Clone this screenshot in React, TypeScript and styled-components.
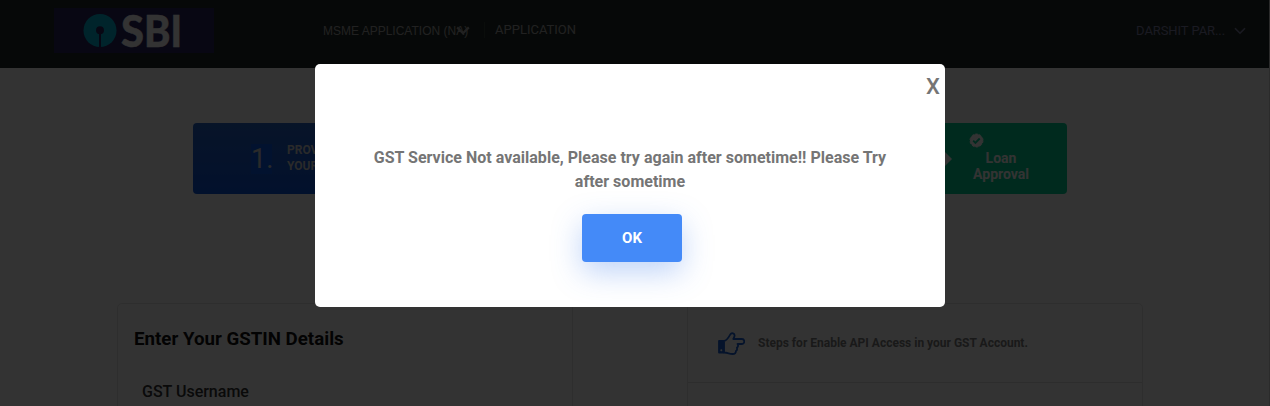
import React from 'react';
import styled, { createGlobalStyle } from 'styled-components';

const GlobalStyle = createGlobalStyle`
  *, *::before, *::after { box-sizing: border-box; }
  body { margin: 0; background: #fff; font-family: Roboto, sans-serif; overflow: hidden; }
`;

const Page = styled.div`
  width: 100%;
  height: 406px;
  overflow: hidden;
  background: #fff;
  border-right: 1px solid #d8d8d8;
`;

const Header = styled.header`
  display: flex;
  align-items: flex-start;
  height: 68px;
  padding-left: 54px;
  background: #222c28;
`;

const LogoBox = styled.div`
  width: 160px;
  height: 45px;
  margin-top: 8px;
  background: #2a2560;
  svg { display: block; overflow: visible; }
`;

const NavItem = styled.div<{ $left: number; $top: number; $family?: string; $color?: string; $size?: number; $width?: number; $spacing?: number }>`
  flex: none;
  display: flex;
  align-items: center;
  width: ${p => (p.$width ? p.$width + 'px' : 'auto')};
  margin: ${p => p.$top}px 0 0 ${p => p.$left}px;
  font-family: ${p => p.$family || 'Roboto'}, sans-serif;
  font-size: ${p => p.$size || 13}px;
  letter-spacing: ${p => p.$spacing || 0}px;
  line-height: 16px;
  white-space: nowrap;
  color: ${p => p.$color || '#a6a6a6'};
`;

const Chevron = styled.svg<{ $shift: number; $weight: number }>`
  flex: none;
  margin-left: ${p => p.$shift}px;
  fill: none;
  stroke: currentColor;
  stroke-width: ${p => p.$weight};
`;

const Divider = styled.div`
  width: 1px;
  height: 16px;
  margin: 22px 0 0 13px;
  background: #33403a;
`;

const Steps = styled.section`
  display: flex;
  width: 874px;
  height: 71px;
  margin: 55px 0 0 193px;
  border-radius: 4px;
  overflow: hidden;
`;

const CurrentStep = styled.div`
  display: flex;
  align-items: center;
  width: 219px;
  padding-left: 58px;
  background: linear-gradient(#2864c8, #0c54dc);
  color: #d0d0d0;
`;

const StepNumber = styled.span`
  width: 21px;
  height: 30px;
  background: #0a5ce8;
  font-size: 27px;
  line-height: 30px;
  font-weight: 400;
`;

const StepLabel = styled.span`
  margin-left: 15px;
  font-size: 12px;
  font-weight: 700;
  line-height: 16px;
  white-space: nowrap;
  margin-bottom: 2px;
`;

const MiddleSteps = styled.div`
  flex: 1;
  background: #00d294;
`;

const ApprovalStep = styled.div`
  display: flex;
  width: 123px;
  background: #00d294;
`;

const Arrow = styled.div`
  align-self: center;
  width: 0;
  border: 8px solid transparent;
  border-left-color: #fff;
  border-right-width: 0;
`;

const ApprovalBody = styled.div`
  width: 96px;
  padding: 10px 0 0 16px;
  color: #fff;
  font-size: 14px;
  font-weight: 700;
  line-height: 16px;
  svg { display: block; margin: 0 0 2px 1px; }
`;

const ApprovalText = styled.div`
  width: 66px;
  text-align: center;
`;

const Content = styled.main`
  display: flex;
  gap: 114px;
  margin: 109px 0 0 117px;
`;

const Panel = styled.section`
  width: 456px;
  height: 180px;
  border: 1px solid #e6e6e6;
  border-radius: 5px;
`;

const Title = styled.h2`
  margin: 24px 0 0 16px;
  font-size: 18.72px;
  font-weight: 700;
  line-height: 22px;
  color: #111;
`;

const FieldLabel = styled.label`
  display: block;
  margin: 32px 0 0 24px;
  font-size: 16px;
  font-weight: 500;
  line-height: 20px;
  color: #333;
`;

const GuideHead = styled.div`
  display: flex;
  align-items: center;
  height: 79px;
  padding-left: 30px;
  border-bottom: 1px solid #e2e2e2;
  font-size: 12px;
  font-weight: 700;
  color: #7e7e7e;
  span { margin-left: 13px; }
`;

const Backdrop = styled.div`
  position: fixed;
  inset: 0;
  display: flex;
  align-items: flex-start;
  background: rgba(0, 0, 0, 0.8);
`;

const Dialog = styled.div`
  display: flex;
  flex-direction: column;
  align-items: center;
  width: 630px;
  height: 243px;
  margin: 64px 0 0 315px;
  background: #fff;
  border-radius: 5px;
`;

const Close = styled.button`
  align-self: flex-end;
  height: 28px;
  margin: 9px 5px 0 0;
  padding: 0;
  border: 0;
  background: none;
  font: 500 22px/28px Roboto, sans-serif;
  color: #757575;
`;

const Message = styled.p`
  width: 530px;
  margin: 45px 0 0;
  text-align: center;
  font-size: 16px;
  font-weight: 700;
  line-height: 24px;
  letter-spacing: 0.015px;
  color: #757575;
`;

const OkButton = styled.button`
  width: 100px;
  height: 48px;
  margin: 20px 0 0 4px;
  padding: 0;
  border: 0;
  border-radius: 4px;
  background: #448af8;
  box-shadow: 0 10px 30px rgba(68, 130, 235, 0.35);
  font: 700 15px Roboto, sans-serif;
  color: #fff;
`;

const LogoLetter = ({ x, width, children }: { x: number; width: number; children: string }) => (
  <text x={x} y="38.5" fontFamily="Lato, sans-serif" fontWeight="900" fontSize="44" fill="#fff" stroke="#fff" strokeWidth="0.4" textLength={width} lengthAdjust="spacingAndGlyphs">{children}</text>
);

const Down = ({ shift, width = 12, weight = 1.6 }: { shift: number; width?: number; weight?: number }) => (
  <Chevron $shift={shift} $weight={weight} width={width} height={width * 2 / 3} viewBox="0 0 12 8">
    <path d="M1 1.200 6 6.200l5-5" />
  </Chevron>
);

export default function App() {
  return (
    <>
      <GlobalStyle />
      <Page>
        <Header>
          <LogoBox>
            <svg width="160" height="45" viewBox="0 0 160 45">
              <circle cx="46" cy="22.5" r="16.5" fill="#00b5d6" />
              <circle cx="46" cy="22.3" r="4" fill="#2a2560" />
              <path d="M45 23h2v16h-2z" fill="#2a2560" />
              <LogoLetter x={67} width={23}>S</LogoLetter>
              <LogoLetter x={90} width={26.5}>B</LogoLetter>
              <LogoLetter x={116.5} width={11.5}>I</LogoLetter>
            </svg>
          </LogoBox>
          <NavItem $left={109} $top={23} $family="'Liberation Sans'" $size={12} $width={148}>
            MSME APPLICATION (NA)<Down shift={-12.5} width={14} weight={1.9} />
          </NavItem>
          <Divider />
          <NavItem $left={10} $top={22}>APPLICATION</NavItem>
          <NavItem $left={560} $top={23} $color="#8080a8" $spacing={-0.08}>
            DARSHIT PAR...<Down shift={9} />
          </NavItem>
        </Header>
        <Steps>
          <CurrentStep>
            <StepNumber>1.</StepNumber>
            <StepLabel>PROVIDE<br />YOUR GST</StepLabel>
          </CurrentStep>
          <MiddleSteps />
          <ApprovalStep>
            <Arrow />
            <ApprovalBody>
              <svg width="15" height="15" viewBox="0 0 15 15">
                <circle cx="7.5" cy="7.5" r="6.5" fill="#fff" stroke="#fff" strokeDasharray="2.6 1.48" />
                <path d="m4.2 7.7 2.2 2.2 4.3-4.4" fill="none" stroke="#00d294" strokeWidth="1.9" />
              </svg>
              <ApprovalText>Loan Approval</ApprovalText>
            </ApprovalBody>
          </ApprovalStep>
        </Steps>
        <Content>
          <Panel>
            <Title>Enter Your GSTIN Details</Title>
            <FieldLabel>GST Username</FieldLabel>
          </Panel>
          <Panel>
            <GuideHead>
              <svg width="27" height="23" viewBox="0 0 27 23" fill="none" stroke="#1c62d4" strokeWidth="1.8" strokeLinejoin="round">
                <path d="M6 9c3-.5 4.500-3.500 6.300-6.600C13.500.3 17 1.300 16.500 4c-.2 1.300-.8 2.200-1.200 3H24c3 0 3 5 0 5h-4.500c1 1.500.3 3-.6 3.700.4 1.400 0 2.800-1 3.300.1 2-1 3-3.400 3-3.500 0-4.500-1.500-8.500-1.500z" />
                <path d="M1 9h4.500v11.500H1z" fill="#1c62d4" />
                <circle cx="3.300" cy="18.300" r="1" fill="#fff" stroke="none" />
              </svg>
              <span>Steps for Enable API Access in your GST Account.</span>
            </GuideHead>
          </Panel>
        </Content>
      </Page>
      <Backdrop>
        <Dialog role="dialog">
          <Close>X</Close>
          <Message>GST Service Not available, Please try again after sometime!! Please Try after sometime</Message>
          <OkButton>OK</OkButton>
        </Dialog>
      </Backdrop>
    </>
  );
}
